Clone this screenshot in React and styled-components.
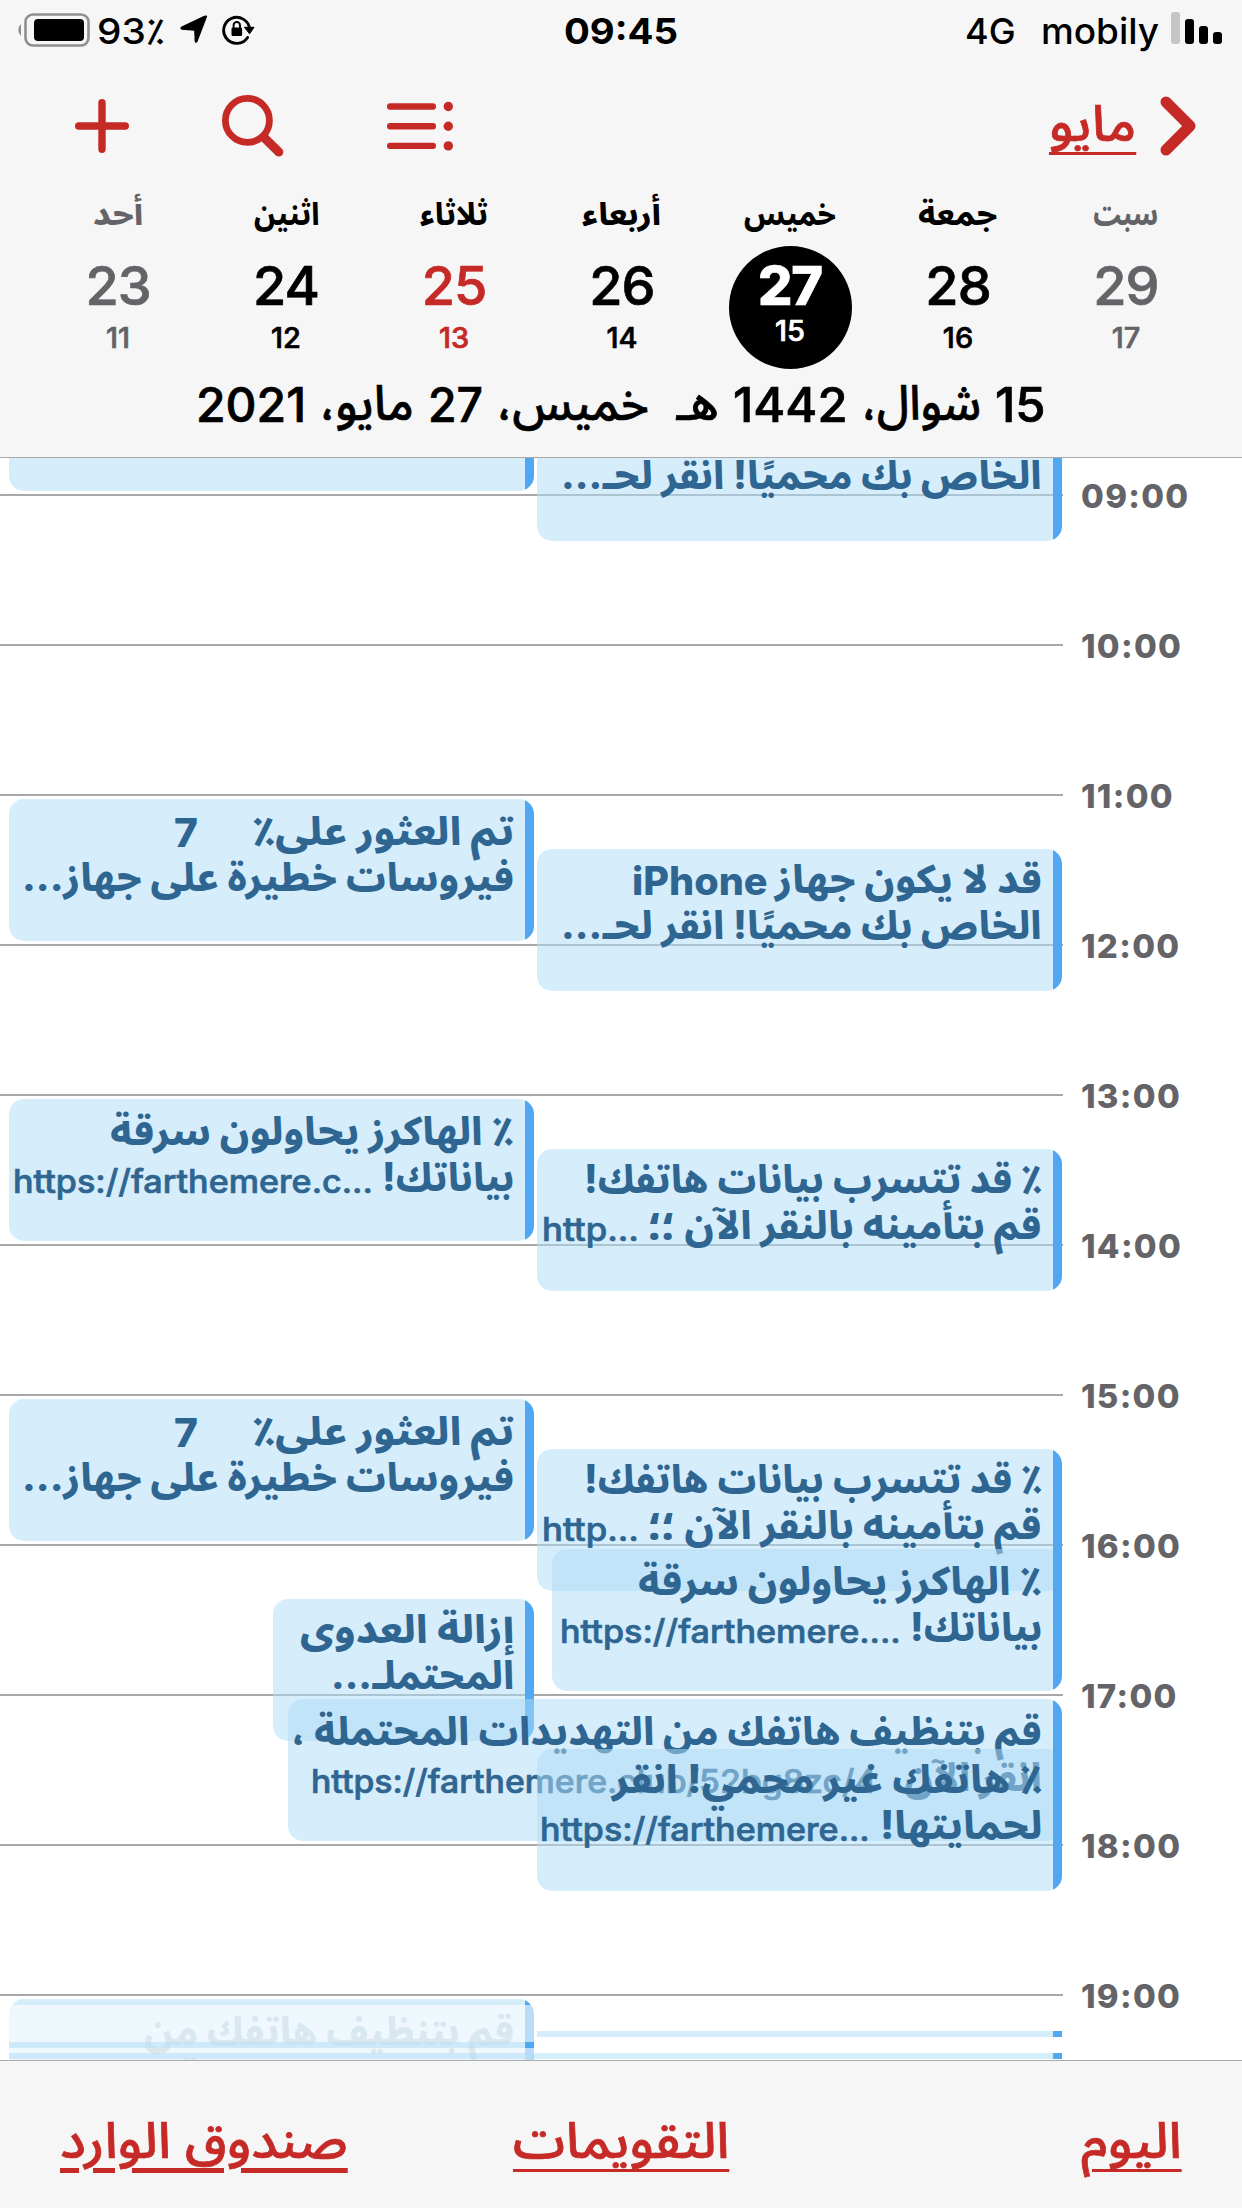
import React, { useLayoutEffect, useRef } from 'react';
import styled, { createGlobalStyle, css } from 'styled-components';

const HOUR = 150;
const FIRST_HOUR = 9;
const FIRST_LINE = 36;

const GlobalStyle = createGlobalStyle`
  body {
    margin: 0;
    background: #fff;
    font-family: Inter, 'Noto Sans Arabic', 'DejaVu Sans', sans-serif;
  }
`;

// Halfway between the medium and semibold cuts
const mediumPlus = css`
  font-weight: 500;
  -webkit-text-stroke: 0.7px currentColor;
`;

const Screen = styled.div`
  display: flex;
  flex-direction: column;
  width: 1242px;
  height: 2208px;
  overflow: hidden;
`;

const Header = styled.header`
  box-sizing: border-box;
  height: 458px;
  background: #f6f6f6;
  border-bottom: 1px solid #aaabab;
`;

const StatusBar = styled.div`
  box-sizing: border-box;
  display: grid;
  grid-template-columns: 1fr auto 1fr;
  height: 64px;
  padding: 11px 19px 0 17px;
  font-size: 36px;
  line-height: 40px;
  font-weight: 500;
`;

const StatusGroup = styled.div`
  display: flex;
  align-items: flex-start;
  justify-content: ${(props) => (props.$end ? 'flex-end' : 'flex-start')};
  > svg {
    margin-top: 2px;
  }
`;

const StatusItem = styled.div`
  margin-left: ${(props) => props.$gap}px;
`;

const Clock = styled.div`
  padding-left: 1px;
  font-weight: 700;
`;

const Toolbar = styled.div`
  box-sizing: border-box;
  display: flex;
  align-items: center;
  height: 124px;
  padding: 0 46px 0 75px;
  color: #c62a27;
`;

const Actions = styled.div`
  display: flex;
  align-items: center;
  flex: 1;
  svg:nth-child(2) {
    margin: 0 103px 0 93px;
  }
`;

const Back = styled.div`
  display: flex;
  align-items: center;
  gap: 24px;
`;

const RedLink = styled.div`
  ${mediumPlus}
  color: #c62a27;
  font-size: 50px;
  line-height: 60px;
  span {
    text-decoration: underline;
    text-decoration-thickness: ${(props) => (props.$thick ? 5 : 3)}px;
    text-underline-offset: ${(props) => (props.$thick ? 10 : 11)}px;
  }
`;

const MonthLink = styled(RedLink)`
  margin-bottom: 6px;
`;

const Week = styled.div`
  display: grid;
  grid-template-columns: repeat(7, 168px);
  padding: 6px 32px 0 34px;
`;

const Day = styled.div`
  display: flex;
  flex-direction: column;
  align-items: center;
  color: ${(props) => props.$color};
`;

const DayName = styled.div`
  color: ${(props) => (props.$weekend ? '#646468' : '#000')};
  font-size: 31px;
  line-height: 40px;
  font-weight: 800;
`;

const DayBadge = styled.div`
  ${mediumPlus}
  box-sizing: border-box;
  display: flex;
  flex-direction: column;
  align-items: center;
  width: 123px;
  height: 123px;
  margin-top: 12px;
  padding-top: 10px;
  border-radius: 50%;
  ${(props) => props.$selected && css`
    background: #000;
    color: #fff;
  `}
`;

const DayNumber = styled.div`
  font-size: 54px;
  line-height: 60px;
  font-weight: ${(props) => (props.$selected ? 800 : 'inherit')};
  letter-spacing: -1px;
`;

const HijriNumber = styled.div`
  margin-top: ${(props) => (props.$selected ? -2 : 5)}px;
  font-size: 29px;
  line-height: 34px;
`;

const DateTitle = styled.div`
  ${mediumPlus}
  display: flex;
  direction: rtl;
  align-items: baseline;
  gap: 14px;
  padding: 4px 196px 0 0;
  font-size: 48px;
  line-height: 60px;
`;

const Calendar = styled.main`
  position: relative;
  flex: 1;
  overflow: hidden;
  padding-top: ${FIRST_LINE}px;
`;

const HourRow = styled.div`
  display: flex;
  height: ${HOUR}px;
`;

const HourLine = styled.div`
  width: 1063px;
  height: 2px;
  background: #a8a8a8;
`;

const HourLabel = styled.div`
  margin: -18px 0 0 18px;
  color: #646468;
  font-size: 33px;
  line-height: 40px;
  font-weight: 800;
  letter-spacing: 1.3px;
`;

// Events on the hour sit two pixels lower inside their card
const EventCard = styled.div`
  position: absolute;
  box-sizing: border-box;
  top: ${(props) => FIRST_LINE + 5 + (props.$start - FIRST_HOUR) * HOUR}px;
  left: ${(props) => props.$left}px;
  width: ${(props) => props.$right - props.$left}px;
  height: 142px;
  padding: ${(props) => (Number.isInteger(props.$start) ? 9 : 7)}px 20px 0 0;
  border-radius: 15px;
  overflow: hidden;
  direction: rtl;
  background: linear-gradient(to left, #50a7f2 9px, rgba(176, 220, 247, 0.52) 9px);
  color: ${(props) => (props.$faded ? '#a0c5d7' : '#2e6691')};
`;

const EventLine = styled.div`
  display: flex;
  align-items: baseline;
  gap: ${(props) => props.$gap || 13}px;
  height: 46px;
  font-size: 39px;
  line-height: 46px;
  font-weight: 800;
`;

const Latin = styled.div`
  position: relative;
  top: 2px;
  ${(props) => props.$url && css`
    ${mediumPlus}
    font-size: 33px;
  `}
`;

const Sliver = styled.div`
  position: absolute;
  top: ${(props) => props.$top}px;
  left: ${(props) => props.$left}px;
  width: ${(props) => props.$right - props.$left}px;
  height: 6px;
  background: linear-gradient(to left, #50a7f2 9px, rgba(176, 220, 247, 0.52) 9px);
`;

const Fade = styled.div`
  position: absolute;
  top: 1547px;
  bottom: 0;
  left: 9px;
  width: 525px;
  background: rgba(255, 255, 255, 0.6);
`;

const Footer = styled.footer`
  box-sizing: border-box;
  display: grid;
  grid-template-columns: 1fr auto 1fr;
  height: 148px;
  padding: 49px 60px 0;
  background: #f6f6f6;
  border-top: 1px solid #aaabab;
  > :last-child {
    justify-self: end;
  }
`;

const FitBox = styled.div`
  width: ${(props) => props.$width}px;
  white-space: pre;
  direction: ${(props) => (props.$rtl ? 'rtl' : 'ltr')};
  > span {
    display: inline-block;
    transform-origin: ${(props) => (props.$rtl ? 'right' : 'left')};
  }
`;

// Stretches or squeezes one run of text to an exact width
function Fit({ width, rtl, children }) {
  const ref = useRef(null);
  useLayoutEffect(() => {
    const el = ref.current;
    el.style.transform = `scaleX(${width / el.offsetWidth})`;
  }, [width, children]);
  return (
    <FitBox $width={width} $rtl={rtl}>
      <span ref={ref}>{children}</span>
    </FitBox>
  );
}

const days = [
  { name: 'أحد', width: 50, day: 23, hijri: 11, color: '#646468', weekend: true },
  { name: 'اثنين', width: 66, day: 24, hijri: 12, color: '#000' },
  { name: 'ثلاثاء', width: 68, day: 25, hijri: 13, color: '#c62a27' },
  { name: 'أربعاء', width: 79, day: 26, hijri: 14, color: '#000' },
  { name: 'خميس', width: 92, day: 27, hijri: 15, color: '#000', selected: true },
  { name: 'جمعة', width: 79, day: 28, hijri: 16, color: '#000' },
  { name: 'سبت', width: 65, day: 29, hijri: 17, color: '#646468', weekend: true },
];

const dateParts = [
  { text: '15', width: 51, latin: true },
  { text: 'شوال،', width: 119 },
  { text: '1442', width: 115, latin: true },
  { text: 'هـ ', width: 56 },
  { text: 'خميس،', width: 152 },
  { text: '27', width: 55, latin: true },
  { text: 'مايو،', width: 94 },
  { text: '2021', width: 110, latin: true },
];

const hours = [9, 10, 11, 12, 13, 14, 15, 16, 17, 18, 19];

const phone = [
  { parts: [{ text: 'قد لا يكون جهاز', width: 267 }, { text: 'iPhone', width: 136, latin: true }], gap: 7 },
  { parts: [{ text: 'الخاص بك محميًا! انقر لحـ...', width: 481 }] },
];
const viruses = [
  { parts: [{ text: 'تم العثور على٪', width: 262 }, { text: '7', width: 24, latin: true }], gap: 54 },
  { parts: [{ text: 'فيروسات خطيرة على جهاز...', width: 492 }] },
];
const leak = [
  { parts: [{ text: '٪ قد تتسرب بيانات هاتفك!', width: 458 }] },
  { parts: [{ text: 'قم بتأمينه بالنقر الآن ؛؛', width: 393 }, { text: 'http...', width: 97, url: true }], gap: 10 },
];
const hackers = (text, width) => [
  { parts: [{ text: '٪ الهاكرز يحاولون سرقة', width: 404 }] },
  { parts: [{ text: 'بياناتك!', width: 132 }, { text, width, url: true }], gap: 9 },
];

const events = [
  { start: 8, left: 9, right: 534, lines: viruses },
  { start: 8 + 1 / 3, left: 537, right: 1062, lines: phone },
  { start: 11, left: 9, right: 534, lines: viruses },
  { start: 11 + 1 / 3, left: 537, right: 1062, lines: phone },
  { start: 13, left: 9, right: 534, lines: hackers('https://farthemere.c...', 360) },
  { start: 13 + 1 / 3, left: 537, right: 1062, lines: leak },
  { start: 15, left: 9, right: 534, lines: viruses },
  { start: 15 + 1 / 3, left: 537, right: 1062, lines: leak },
  { start: 16, left: 552, right: 1062, lines: hackers('https://farthemere....', 341) },
  {
    start: 16 + 1 / 3,
    left: 273,
    right: 534,
    lines: [
      { parts: [{ text: 'إزالة العدوى', width: 214 }] },
      { parts: [{ text: 'المحتملـ...', width: 183 }] },
    ],
  },
  {
    start: 17,
    left: 288,
    right: 1062,
    lines: [
      { parts: [{ text: 'قم بتنظيف هاتفك من التهديدات المحتملة ،', width: 750 }] },
      { parts: [{ text: 'انقر الآن.', width: 152 }, { text: 'https://farthemere.club/52bg8zc/4', width: 566, url: true }] },
    ],
  },
  {
    start: 17 + 1 / 3,
    left: 537,
    right: 1062,
    lines: [
      { parts: [{ text: '٪ هاتفك غير محمي! انقر', width: 430 }] },
      { parts: [{ text: 'لحمايتها!', width: 162 }, { text: 'https://farthemere...', width: 330, url: true }], gap: 10 },
    ],
  },
  {
    start: 19,
    left: 9,
    right: 534,
    faded: true,
    lines: [
      { parts: [{ text: 'قم بتنظيف هاتفك من', width: 370 }] },
      { parts: [{ text: 'التهديدات المحتملة ، انقر', width: 429 }] },
    ],
  },
];

function Part({ text, width, latin, url }) {
  if (latin || url) {
    return <Latin $url={url}><Fit width={width}>{text}</Fit></Latin>;
  }
  return <Fit width={width} rtl>{text}</Fit>;
}

function BatteryIcon() {
  return (
    <svg width='73' height='34' viewBox='0 0 73 34'>
      <path d='M4 11 A8 8 0 0 0 4 23 Z' fill='#8f8f8f' />
      <rect x='8.5' y='1.5' width='63' height='31' rx='7.5' fill='none' stroke='#8f8f8f' strokeWidth='2.6' />
      <rect x='17' y='6' width='50' height='22' rx='4' />
    </svg>
  );
}

function LocationIcon() {
  return (
    <svg width='28' height='32' viewBox='0 0 28 32'>
      <path d='M26.3 5 L17 29.4 Q15.8 31 15.2 29.2 L14.8 18.2 L2 17.2 Q0 16.4 1.8 15 L24.5 4.4 Q27 3.4 26.3 5 Z' stroke='#000' strokeWidth='1.2' strokeLinejoin='round' />
    </svg>
  );
}

function RotationLockIcon() {
  return (
    <svg width='33' height='34' viewBox='0 0 33 34'>
      <path d='M25.6 26.4 A13 13 0 1 1 27.6 18' fill='none' stroke='#000' strokeWidth='2.8' strokeLinecap='round' />
      <path d='M22.4 16.3 H32 L27.6 22.8 Z' stroke='#000' strokeLinejoin='round' />
      <rect x='9.5' y='16.6' width='10.6' height='8.4' rx='1.3' />
      <path d='M11.6 17 V14.2 A3.2 3.2 0 0 1 18 14.2 V17' fill='none' stroke='#000' strokeWidth='1.9' />
    </svg>
  );
}

function SignalIcon() {
  return (
    <svg width='52' height='34' viewBox='0 0 52 34'>
      <rect x='0' y='1' width='9' height='32' rx='3' fill='#c5c5c5' />
      <rect x='14' y='8' width='9' height='25' rx='3' />
      <rect x='28' y='15' width='9' height='18' rx='3' />
      <rect x='42' y='21' width='9' height='12' rx='3' />
    </svg>
  );
}

function PlusIcon() {
  return (
    <svg width='54' height='54' viewBox='0 0 54 54' stroke='currentColor' strokeWidth='7.4' strokeLinecap='round'>
      <path d='M27 3.7 V50.3 M3.7 27 H50.3' />
    </svg>
  );
}

function SearchIcon() {
  return (
    <svg width='62' height='62' viewBox='0 0 62 62' fill='none' stroke='currentColor'>
      <circle cx='25.4' cy='25.4' r='22' strokeWidth='6.8' />
      <path d='M42 42.5 L56.8 57' strokeWidth='9' strokeLinecap='round' />
    </svg>
  );
}

function ListIcon() {
  return (
    <svg width='66' height='50' viewBox='0 0 66 50' fill='currentColor'>
      {[2.3, 22, 41.7].map((y) => (
        <g key={y}>
          <rect x='0' y={y} width='49' height='6.4' rx='3' />
          <circle cx='61.3' cy={y + 3.2} r='4.7' />
        </g>
      ))}
    </svg>
  );
}

function ChevronIcon() {
  return (
    <svg width='36' height='60' viewBox='0 0 36 60' fill='none' stroke='currentColor' strokeWidth='11' strokeLinecap='round' strokeLinejoin='round'>
      <path d='M6 6 L30 30 L6 54' />
    </svg>
  );
}

function App() {
  return (
    <Screen>
      <GlobalStyle />
      <Header>
        <StatusBar>
          <StatusGroup>
            <BatteryIcon />
            <StatusItem $gap={7}><Fit width={68}>93٪</Fit></StatusItem>
            <StatusItem $gap={15}><LocationIcon /></StatusItem>
            <StatusItem $gap={14}><RotationLockIcon /></StatusItem>
          </StatusGroup>
          <Clock><Fit width={114}>09:45</Fit></Clock>
          <StatusGroup $end>
            <StatusItem><Fit width={51}>4G</Fit></StatusItem>
            <StatusItem $gap={25}><Fit width={118}>mobily</Fit></StatusItem>
            <StatusItem $gap={12}><SignalIcon /></StatusItem>
          </StatusGroup>
        </StatusBar>
        <Toolbar>
          <Actions>
            <PlusIcon />
            <SearchIcon />
            <ListIcon />
          </Actions>
          <Back>
            <MonthLink><Fit width={87} rtl>مايو</Fit></MonthLink>
            <ChevronIcon />
          </Back>
        </Toolbar>
        <Week>
          {days.map(({ name, width, day, hijri, color, selected, weekend }) => (
            <Day key={day} $color={color}>
              <DayName $weekend={weekend}><Fit width={width} rtl>{name}</Fit></DayName>
              <DayBadge $selected={selected}>
                <DayNumber $selected={selected}>{day}</DayNumber>
                <HijriNumber $selected={selected}>{hijri}</HijriNumber>
              </DayBadge>
            </Day>
          ))}
        </Week>
        <DateTitle>
          {dateParts.map((part) => <Part key={part.text} {...part} />)}
        </DateTitle>
      </Header>
      <Calendar>
        {hours.map((hour) => (
          <HourRow key={hour}>
            <HourLine />
            <HourLabel>{`${String(hour).padStart(2, '0')}:00`}</HourLabel>
          </HourRow>
        ))}
        {events.map(({ start, left, right, faded, lines }) => (
          <EventCard key={start} $start={start} $left={left} $right={right} $faded={faded}>
            {lines.map(({ parts, gap }) => (
              <EventLine key={parts[0].text} $gap={gap}>
                {parts.map((part) => <Part key={part.text} {...part} />)}
              </EventLine>
            ))}
          </EventCard>
        ))}
        <Fade />
        <Sliver $top={1573} $left={537} $right={1062} />
        <Sliver $top={1584} $left={9} $right={534} />
        <Sliver $top={1595} $left={9} $right={1062} />
      </Calendar>
      <Footer>
        <RedLink $thick><Fit width={288} rtl>صندوق الوارد</Fit></RedLink>
        <RedLink><Fit width={216} rtl>التقويمات</Fit></RedLink>
        <RedLink><Fit width={101} rtl>اليوم</Fit></RedLink>
      </Footer>
    </Screen>
  );
}

export default App;
